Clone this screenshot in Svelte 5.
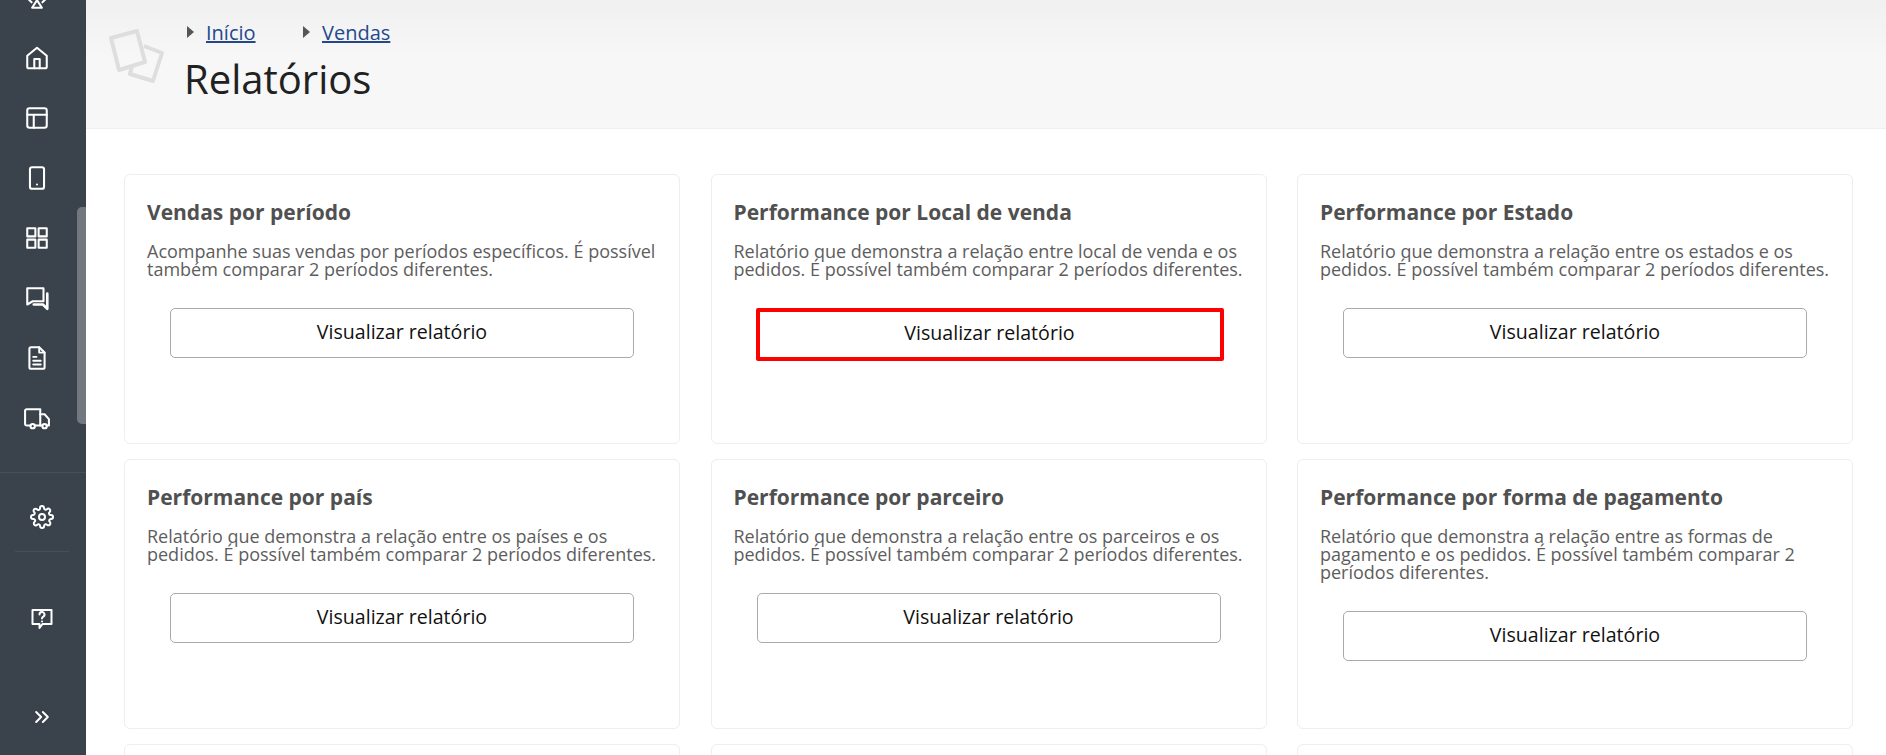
<script>
  const navIcons = ['top','home','layout','phone','grid','chat','doc','truck','next'];
  const cards = [
    { t: 'Vendas por período', d: 'Acompanhe suas vendas por períodos específicos. É possível também comparar 2 períodos diferentes.' },
    { t: 'Performance por Local de venda', d: 'Relatório que demonstra a relação entre local de venda e os pedidos. É possível também comparar 2 períodos diferentes.', hl: true },
    { t: 'Performance por Estado', d: 'Relatório que demonstra a relação entre os estados e os pedidos. É possível também comparar 2 períodos diferentes.' },
    { t: 'Performance por país', d: 'Relatório que demonstra a relação entre os países e os pedidos. É possível também comparar 2 períodos diferentes.' },
    { t: 'Performance por parceiro', d: 'Relatório que demonstra a relação entre os parceiros e os pedidos. É possível também comparar 2 períodos diferentes.' },
    { t: 'Performance por forma de pagamento', d: 'Relatório que demonstra a relação entre as formas de pagamento e os pedidos. É possível também comparar 2 períodos diferentes.' }
  ];
</script>

<div class="app">
  <aside class="side">
    <div class="scroll">
      <div class="list">
        {#each navIcons as n}
          <div class="item">
            <svg viewBox="0 0 24 24" width="26" height="26" fill="none" stroke="#fff" stroke-width="1.900" stroke-linejoin="round" stroke-linecap="round">
              {#if n === 'top'}
                <path d="M3 12l4 4M21 12l-4 4M12 14l-4.500 7h9z" />
              {:else if n === 'home'}
                <path d="M12 2.500 L21 10 V20 a1.500 1.500 0 0 1-1.500 1.500 H4.500 A1.500 1.500 0 0 1 3 20 V10 Z" />
                <path d="M9.500 21.500 V13 h5 V21.500" />
              {:else if n === 'layout'}
                <rect x="3" y="3" width="18" height="18" rx="2" />
                <path d="M3 9h18M9 9v12" />
              {:else if n === 'phone'}
                <rect x="5.500" y="2" width="13" height="20" rx="2" />
                <path d="M12 18h.01" />
              {:else if n === 'grid'}
                <rect x="3" y="3" width="7.500" height="7.500" /><rect x="13.500" y="3" width="7.500" height="7.500" />
                <rect x="3" y="13.500" width="7.500" height="7.500" /><rect x="13.500" y="13.500" width="7.500" height="7.500" />
              {:else if n === 'chat'}
                <path d="M3 3h15v12H8l-5 3z" />
                <path d="M21.500 8v14l-4-4H9" stroke-width="2.400" />
              {:else if n === 'doc'}
                <path d="M5 3.500A1.500 1.500 0 0 1 6.500 2H14l5 5v13.500a1.500 1.500 0 0 1-1.500 1.500h-11A1.500 1.500 0 0 1 5 20.500z" />
                <path d="M14 2v5h5M8.500 11h3M8.500 14.500h7M8.500 18h7" stroke-width="1.700" />
              {:else if n === 'truck'}
                <path d="M6 19H2.500A1.500 1.500 0 0 1 1 17.500V5.500A1.500 1.500 0 0 1 2.500 4H15v15H10" />
                <path d="M15 8.500h4l4 4.500V19h-2M15 19h2" />
                <circle cx="8" cy="19.500" r="2" /><circle cx="19" cy="19.500" r="2" />
              {:else}
                <path d="M2 16a10 6 0 0 1 20 0v6H2z" /><path d="M9 9h6" />
              {/if}
            </svg>
          </div>
        {/each}
      </div>
      <div class="thumb"></div>
    </div>
    <div class="bottom">
      <div class="gear">
        <svg viewBox="0 0 24 24" width="24" height="24" fill="none" stroke="#fff" stroke-width="2" stroke-linejoin="round" stroke-linecap="round">
          <circle cx="12" cy="12" r="3" />
          <path d="M19.400 15a1.650 1.650 0 0 0 .33 1.820l.06.06a2 2 0 1 1-2.830 2.830l-.06-.06a1.650 1.650 0 0 0-2.800 1.170V21a2 2 0 1 1-4 0v-.09a1.650 1.650 0 0 0-2.800-1.150l-.06.06a2 2 0 1 1-2.830-2.830l.06-.06A1.650 1.650 0 0 0 3.090 14H3a2 2 0 1 1 0-4h.09a1.650 1.650 0 0 0 1.150-2.800l-.06-.06a2 2 0 1 1 2.830-2.830l.06.06A1.650 1.650 0 0 0 10 3.090V3a2 2 0 1 1 4 0v.09a1.650 1.650 0 0 0 2.800 1.150l.06-.06a2 2 0 1 1 2.830 2.830l-.06.06A1.650 1.650 0 0 0 20.910 10H21a2 2 0 1 1 0 4h-.09a1.650 1.650 0 0 0-1.510 1z" />
        </svg>
      </div>
      <div class="rule"></div>
      <div class="help">
        <svg viewBox="0 0 24 24" width="24" height="24" fill="none" stroke="#fff" stroke-width="2" stroke-linejoin="round" stroke-linecap="round">
          <path d="M2.500 4h19v14h-9l-3 4v-4h-7z" />
          <path d="M9.500 8.500a2.500 2.500 0 1 1 3.500 2.300c-.7.4-1 .9-1 1.700M12 15.500h.01" />
        </svg>
      </div>
      <div class="expand">
        <svg viewBox="0 0 24 24" width="20" height="20" fill="none" stroke="#fff" stroke-width="2.400" stroke-linejoin="round" stroke-linecap="round">
          <path d="M5 6l6 6-6 6M13 6l6 6-6 6" />
        </svg>
      </div>
    </div>
  </aside>

  <main class="main">
    <header class="head">
      <svg class="logo" viewBox="0 0 56 56" width="56" height="56" fill="none" stroke="#dedede" stroke-width="4" stroke-linejoin="round">
        <path d="M3 9 L29 2 L37 33 L11 41 Z" />
        <path d="M36 17 L54 24 L45 52 L22 45 L24 37" />
      </svg>
      <div class="head-text">
        <nav class="crumbs">
          <span class="crumb"><i class="tri"></i><a href="#a">Início</a></span>
          <span class="crumb"><i class="tri"></i><a href="#b">Vendas</a></span>
        </nav>
        <h1>Relatórios</h1>
      </div>
    </header>

    <section class="grid">
      {#each cards as c}
        <article class="card">
          <h2>{c.t}</h2>
          <p>{c.d}</p>
          <button class:hl={c.hl}>Visualizar relatório</button>
        </article>
      {/each}
      <article class="card"></article>
      <article class="card"></article>
      <article class="card"></article>
    </section>
  </main>
</div>

<style>
  :global(body) { margin: 0; background: #fff; font-family: "Open Sans", sans-serif; }
  .app { display: flex; height: 755px; width: 1886px; overflow: hidden; }
  .side { width: 86px; flex: none; background: #3a424b; display: flex; flex-direction: column; }
  .scroll { height: 473px; flex: none; overflow: hidden; position: relative; border-bottom: 1px solid #47505a; box-sizing: border-box; }
  .list { margin-top: -32px; }
  .item { height: 60px; display: flex; align-items: center; justify-content: center; padding-right: 13px; }
  .thumb { position: absolute; left: 77px; top: 207px; width: 9px; height: 217px; background: #73787e; border-radius: 5px 0 0 5px; }
  .bottom { flex: 1; display: flex; flex-direction: column; align-items: center; padding-right: 3px; }
  .gear { height: 78px; box-sizing: border-box; padding-top: 10px; display: flex; align-items: center; justify-content: center; }
  .rule { width: 54px; height: 1px; background: #47505a; flex: none; }
  .help { height: 132px; display: flex; align-items: center; justify-content: center; }
  .expand { height: 66px; display: flex; align-items: center; justify-content: center; }
  .main { flex: 1; min-width: 0; }
  .head { height: 129px; box-sizing: border-box; background: linear-gradient(#f0f0f0, #f7f7f7 45%); border-bottom: 1px solid #f0f0f0; display: flex; padding: 29px 0 0 22px; }
  .logo { flex: none; margin-right: 20px; }
  .head-text { margin-top: -12px; }
  .crumbs { display: flex; height: 30px; align-items: center; padding-left: 3px; }
  .crumb { display: flex; align-items: center; width: 116px; font-size: 20px; }
  .tri { width: 0; height: 0; border-left: 7px solid #555; border-top: 6px solid transparent; border-bottom: 6px solid transparent; margin-right: 12px; }
  a { color: #23488c; }
  h1 { margin: 6px 0 0; font-size: 40px; line-height: 52px; font-weight: 400; color: #212121; }
  .grid { display: grid; grid-template-columns: repeat(3, 556px); grid-auto-rows: 270px; column-gap: 30.500px; row-gap: 15px; padding: 45px 0 0 38px; }
  .card { box-sizing: border-box; border: 1px solid #eee; border-radius: 6px; padding: 24px 22px 22px; background: #fff; }
  h2 { margin: 0 0 16px; font-size: 21px; line-height: 27px; font-weight: 700; color: #505050; }
  p { margin: 0 0 30px; font-size: 18px; line-height: 18px; color: #5d5d5d; }
  button { display: block; margin: 0 auto; width: 464px; height: 50px; background: #fff; border: 1px solid #aaa; border-radius: 5px; font: 400 19.600px "Open Sans", sans-serif; color: #111; padding: 0 0 3px; }
  button.hl { border: 4px solid #f00; border-radius: 2px; width: 468px; height: 53px; margin-left: 22px; padding-bottom: 5px; }
</style>
